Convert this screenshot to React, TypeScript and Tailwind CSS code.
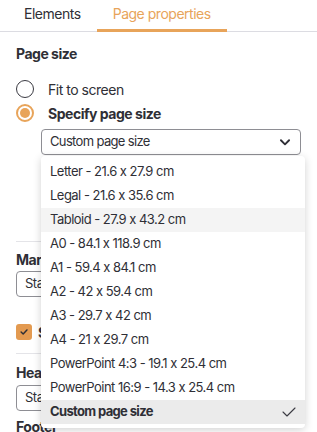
const sizes = [
  'Letter - 21.6 x 27.9 cm',
  'Legal - 21.6 x 35.6 cm',
  'Tabloid - 27.9 x 43.2 cm',
  'A0 - 84.1 x 118.9 cm',
  'A1 - 59.4 x 84.1 cm',
  'A2 - 42 x 59.4 cm',
  'A3 - 29.7 x 42 cm',
  'A4 - 21 x 29.7 cm',
  'PowerPoint 4:3 - 19.1 x 25.4 cm',
  'PowerPoint 16:9 - 14.3 x 25.4 cm',
];

const Chevron = () => (
  <svg width="14" height="14" viewBox="0 0 24 24" fill="none" stroke="#2f2f36" strokeWidth="3.2" strokeLinecap="round" strokeLinejoin="round">
    <polyline points="5 9 12 16 19 9" />
  </svg>
);

const App = () => {
  return (
    <div className="relative w-[317px] h-[432px] overflow-hidden bg-white text-[#2f2f36] font-['Inter',sans-serif] tracking-[-0.03em] [font-feature-settings:'calt'_0]">
      {/* tabs */}
      <div className="flex h-[32px] border-b border-[#dcdce2] pl-2">
        <div className="px-4 pt-[3px] text-[14px] text-[#2f2f36]">Elements</div>
        <div className="px-4 pt-[3px] text-[14px] text-[#e8a45a] border-b-[3px] border-[#e8a45a] -mb-px">
          Page properties
        </div>
      </div>

      <div className="px-4 pt-[12px]">
        <div className="h-[20px] leading-[20px] text-[14px] font-bold">Page size</div>

        <div className="mt-[13px] flex items-center h-[24px]">
          <span className="w-[18px] h-[18px] rounded-full border-[1.5px] border-[#3a3a42]" />
          <span className="ml-[14px] text-[14px]">Fit to screen</span>
        </div>
        <div className="flex items-center h-[24px]">
          <span className="w-[18px] h-[18px] rounded-full border-2 border-[#e8a45a] flex items-center justify-center">
            <span className="w-[10px] h-[10px] rounded-full bg-[#e8a45a]" />
          </span>
          <span className="ml-[14px] text-[14px] font-bold">Specify page size</span>
        </div>

        <div className="mt-[4px] ml-[25px] h-[26px] rounded-[4px] border border-[#8e8e94] flex items-center justify-between pl-[8px] pr-[8px] text-[13px] tracking-[-0.05em]">
          <span>Custom page size</span>
          <Chevron />
        </div>

        {/* content behind dropdown */}
        <div className="mt-[86px] border-t border-[#e4e4e8]" />
        <div className="mt-[8px] h-[20px] leading-[20px] text-[14px] font-bold">Margins</div>
        <div className="mt-px h-[26px] w-[120px] rounded-[4px] border border-[#8e8e94] flex items-center pl-[8px] text-[13px]">
          Standard
        </div>
        <div className="mt-[25px] flex items-center h-[20px]">
          <span className="w-[16px] h-[16px] rounded-[3px] bg-[#e39a50] flex items-center justify-center">
            <svg width="10" height="10" viewBox="0 0 24 24" fill="none" stroke="#2f2f36" strokeWidth="3.5" strokeLinecap="round" strokeLinejoin="round">
              <polyline points="5 12 10 17 19 7" />
            </svg>
          </span>
          <span className="ml-[6px] text-[14px] font-bold">Show margins</span>
        </div>
        <div className="mt-[11px] border-t border-[#e4e4e8]" />
        <div className="mt-[9px] h-[20px] leading-[20px] text-[14px] font-bold">Header</div>
        <div className="mt-[2px] h-[26px] w-[120px] rounded-[4px] border border-[#8e8e94] flex items-center pl-[8px] text-[13px]">
          Standard
        </div>
        <div className="mt-[6px] h-[20px] leading-[20px] text-[14px] font-bold">Footer</div>
      </div>

      {/* dropdown list */}
      <div className="absolute left-[41px] top-[156px] w-[264px] bg-white rounded-[4px] py-[4px] shadow-[0_2px_8px_rgba(0,0,0,0.18)] text-[13px] tracking-[-0.04em]">
        {sizes.map((s, i) => (
          <div
            key={s}
            className={`h-[24px] flex items-center pl-[9px] ${i === 2 ? 'bg-[#f4f4f4]' : ''}`}
          >
            {s}
          </div>
        ))}
        <div className="h-[24px] flex items-center justify-between pl-[9px] pr-[8px] bg-[#ebebeb] font-bold tracking-[-0.05em]">
          <span>Custom page size</span>
          <svg width="16" height="16" viewBox="0 0 24 24" fill="none" stroke="#3a3a42" strokeWidth="1.6" strokeLinecap="round" strokeLinejoin="round">
            <polyline points="3 12 9 18 21 6" />
          </svg>
        </div>
      </div>
    </div>
  );
};

export default App;
